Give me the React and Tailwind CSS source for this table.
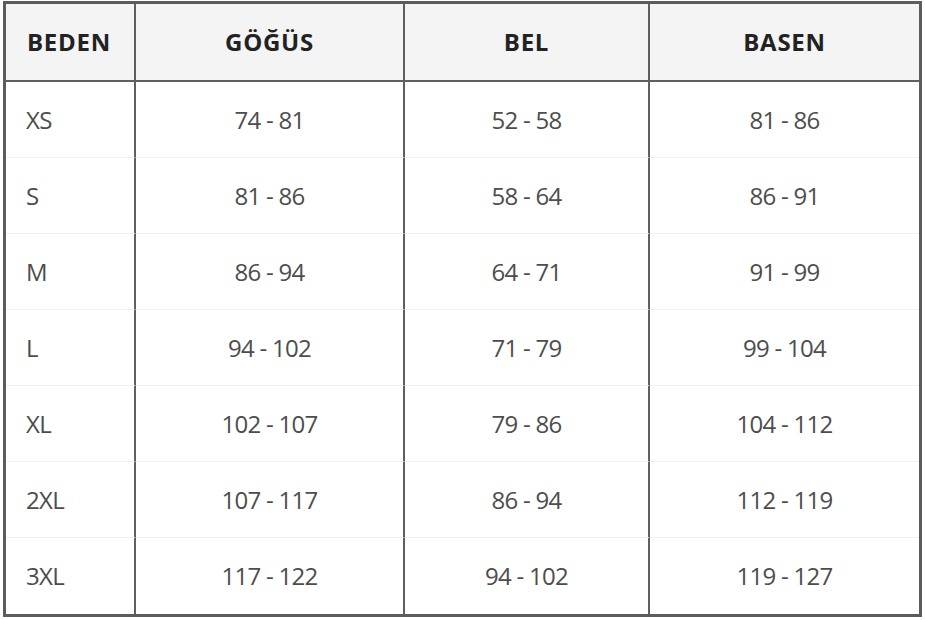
import React from 'react';

const rows = [
  ['XS', '74 - 81', '52 - 58', '81 - 86'],
  ['S', '81 - 86', '58 - 64', '86 - 91'],
  ['M', '86 - 94', '64 - 71', '91 - 99'],
  ['L', '94 - 102', '71 - 79', '99 - 104'],
  ['XL', '102 - 107', '79 - 86', '104 - 112'],
  ['2XL', '107 - 117', '86 - 94', '112 - 119'],
  ['3XL', '117 - 122', '94 - 102', '119 - 127'],
];

const headers = ['BEDEN', 'GÖĞÜS', 'BEL', 'BASEN'];

export default function App() {
  return (
    <div className="w-[925px] h-[620px] bg-white pt-[1px] pl-[3px]" style={{ fontFamily: '"Open Sans", "Liberation Sans", sans-serif' }}>
      <div className="w-[919px] border-[3px] border-[#5c5c5c] grid grid-cols-[130px_269px_245px_1fr]">
        {headers.map((h, i) => (
          <div
            key={h}
            className={`h-[78px] bg-[#f4f4f4] border-b-2 border-[#5f5f5f] flex items-center text-[24px] font-bold tracking-[0.03em] text-[#222] ${
              i < 3 ? 'border-r-2' : ''
            } ${i === 0 ? 'pl-[21px]' : 'justify-center'}`}
          >
            {h}
          </div>
        ))}
        {rows.map((r, ri) =>
          r.map((c, ci) => (
            <div
              key={ri + '-' + ci}
              className={`h-[76px] flex items-center text-[24px] text-[#4d4d4d] tracking-[-0.03em] ${
                ri < rows.length - 1 ? 'border-b border-b-[#efefef]' : ''
              } ${ci < 3 ? 'border-r-2 border-r-[#5f5f5f]' : ''} ${ci === 0 ? 'pl-[20px]' : 'justify-center'}`}
            >
              {c}
            </div>
          ))
        )}
      </div>
    </div>
  );
}
